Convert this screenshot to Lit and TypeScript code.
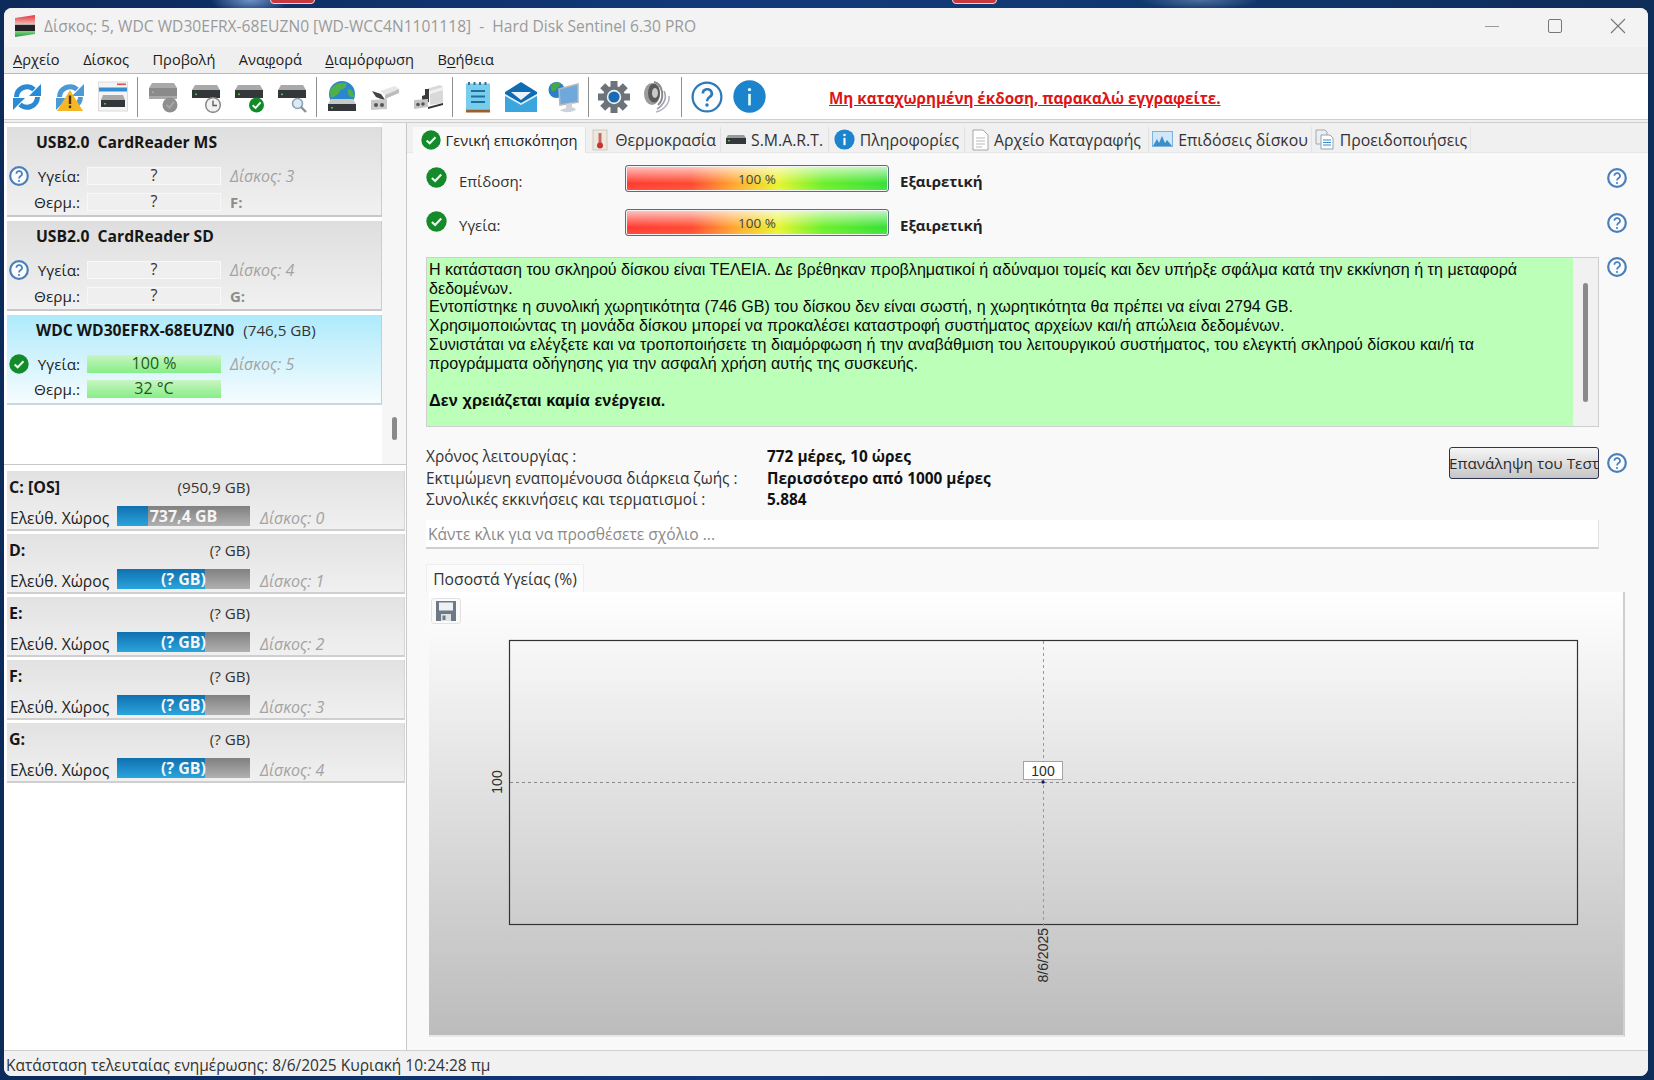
import { LitElement, html, css, svg } from "lit";
import { customElement } from "lit/decorators.js";

const hdd = (x: number, y: number, w = 28, top = "#a9a9a9", front = "#33373a", led = "#4fc04f") => svg`
  <path d="M${x + 3} ${y} H${x + w - 3} L${x + w} ${y + 5} H${x} Z" fill="${top}"/>
  <rect x="${x}" y="${y + 5}" width="${w}" height="8" fill="${front}"/>
  <rect x="${x + 3}" y="${y + 8.5}" width="2" height="1.6" fill="${led}"/>`;

const refreshArrows = (c: string) => svg`
  <path d="M5.5 16 A10.5 10.5 0 0 1 23 8.5" fill="none" stroke="${c}" stroke-width="5"/>
  <path d="M30 3 V15 H18 Z" fill="${c}"/>
  <path d="M26.5 16 A10.5 10.5 0 0 1 9 23.5" fill="none" stroke="${c}" stroke-width="5"/>
  <path d="M2 29 V17 H14 Z" fill="${c}"/>`;

const box = (inner: unknown, s = 32) => html`<svg width="${s}" height="${s}" viewBox="0 0 32 32">${inner}</svg>`;

const checkIcon = (s = 20) => html`<svg width="${s}" height="${s}" viewBox="0 0 20 20" class="sic">
  <circle cx="10" cy="10" r="9.7" fill="#158a2b"/>
  <path d="M5.6 10.4 L8.7 13.3 L14.5 7.2" fill="none" stroke="#e9f8ec" stroke-width="2"/></svg>`;

const helpGlyph = (c: string, w: number) => svg`
  <path d="M7.4 7.8 A2.8 2.6 0 1 1 11.6 10 C10.4 10.8 10 11.2 10 12.6" fill="none" stroke="${c}" stroke-width="${w}"/>
  <circle cx="10" cy="15" r="1.1" fill="${c}"/>`;

const helpIcon = (s = 20) => html`<svg width="${s}" height="${s}" viewBox="0 0 20 20" class="sic">
  <circle cx="10" cy="10" r="8.8" fill="#fafcff" stroke="#4a7fb9" stroke-width="2.2"/>${helpGlyph("#4a7fb9", 1.7)}</svg>`;

const infoIcon = (s = 20) => html`<svg width="${s}" height="${s}" viewBox="0 0 20 20" class="sic">
  <circle cx="10" cy="10" r="9.6" fill="#1b84cc"/>
  <rect x="9" y="8.4" width="2" height="7" fill="#fff"/><circle cx="10" cy="5.8" r="1.2" fill="#fff"/></svg>`;

const gearTeeth = [0, 45, 90, 135, 180, 225, 270, 315];

const toolbarIcons: Record<string, unknown> = {
  refresh: box(refreshArrows("#2a8ad4")),
  warn: box(svg`${refreshArrows("#4b9ad6")}
    <path d="M16 9 L29 30 H3 Z" fill="#f5b728"/>
    <rect x="14.8" y="14.5" width="2.4" height="8.5" fill="#4a3300"/>
    <rect x="14.8" y="24.5" width="2.4" height="2.6" fill="#4a3300"/>`),
  panel: box(svg`
    <rect x="1.5" y="1" width="29" height="29" fill="#f4f4f4" stroke="#dcdcdc"/>
    <rect x="20" y="2.5" width="9" height="1.6" fill="#d9534f"/>
    <rect x="2" y="6.5" width="28" height="4" fill="#2f8fd0"/>
    <path d="M6 14 H26 L28 19 H4 Z" fill="#a9a9a9"/>
    <rect x="4" y="19" width="24" height="7" fill="#33373a"/>
    <rect x="7" y="22" width="2" height="1.5" fill="#4fc04f"/>`),
  hddGray: box(svg`
    ${hdd(2, 2, 28, "#a9a9a9", "#8a8a8a", "#a9a9a9")}
    <rect x="2" y="15" width="28" height="3" fill="#a9a9a9"/>
    <circle cx="23" cy="24" r="7.5" fill="#8f8f8f"/>
    <path d="M19.5 24 L22.4 26.6 L27 21" fill="none" stroke="#a8a8a8" stroke-width="1.8"/>`),
  hddClock: box(svg`
    ${hdd(2, 4)}
    <circle cx="23" cy="24" r="7.3" fill="#f1f1f1" stroke="#8a8a8a" stroke-width="1.5"/>
    <path d="M23 19.5 V24.5 H27" fill="none" stroke="#5e5e5e" stroke-width="1.4"/>`),
  hddCheck: box(svg`
    ${hdd(2, 4)}
    <circle cx="23.5" cy="24" r="7.5" fill="#128a2a"/>
    <path d="M19.6 24.2 L22.6 27 L27.6 21.4" fill="none" stroke="#fff" stroke-width="1.9"/>`),
  hddSearch: box(svg`
    ${hdd(2, 4)}
    <circle cx="21.5" cy="22.5" r="5" fill="#dceaf5" stroke="#8ca3b5" stroke-width="1.6"/>
    <path d="M25 26 L30 31" stroke="#8f8f8f" stroke-width="2.4"/>`),
  globeHdd: box(svg`
    <circle cx="16" cy="13" r="13" fill="#2a86cf"/>
    <path d="M6 6 C10 2 16 1 20 2 C22 6 17 9 14 9 C14 13 9 15 6 17 C3 14 4 9 6 6 Z" fill="#4fb048"/>
    <path d="M22 8 C26 8 28 12 28 16 C25 17 21 15 22 8 Z" fill="#4fb048"/>
    <path d="M5 18 H27 L30 23 H2 Z" fill="#c8c8c8"/>
    <rect x="2" y="23" width="28" height="7" fill="#33373a"/>
    <rect x="5" y="26" width="2" height="1.5" fill="#4fc04f"/>`),
  tool1: box(svg`
    <path d="M11 10 L26 5 L30 8 L16 14 Z" fill="#e7e7e7"/><path d="M16 14 L30 8 V12 L16 18 Z" fill="#bdbdbd"/>
    <path d="M3 10 L12 13 L17 20 L7 16 Z" fill="#444"/>
    <path d="M2 19 L18 18 V28 L2 29 Z" fill="#c9c9c9"/>
    <circle cx="7" cy="24" r="2" fill="#555"/><circle cx="13" cy="24" r="2" fill="#555"/>`),
  tool2: box(svg`
    <path d="M14 8 L28 4 L31 6 V22 L18 24 V10 Z" fill="#d9d9d9"/><path d="M18 10 L31 6 V9 L18 13 Z" fill="#f1f1f1"/>
    <path d="M13 8 H17 V21 L10 22 V15 L13 14 Z" fill="#3b3b3b"/>
    <path d="M2 19 L16 18 V26 L2 28 Z" fill="#c6c6c6"/>
    <circle cx="6" cy="23.5" r="1.8" fill="#555"/><circle cx="11" cy="23" r="1.8" fill="#555"/>
    <path d="M16 26 L31 22 V24 L16 28 Z" fill="#333"/>`),
  note: box(svg`
    <rect x="4" y="2.5" width="24" height="26" fill="#79cdec"/>
    <rect x="4" y="28.5" width="24" height="3" fill="#9c5f2b"/>
    <path d="M7 1 V4 M12.5 1 V4 M18 1 V4 M23.5 1 V4" stroke="#3a6f90" stroke-width="2"/>
    <path d="M9 10 H23 M9 15.5 H23 M9 21 H23" stroke="#1f6f9c" stroke-width="1.8"/>`),
  mail: box(svg`
    <path d="M0 11 L16 1 L32 11 V13 L16 23 L0 13 Z" fill="#0f6cb3"/>
    <path d="M6 11 H26 L16 19 Z" fill="#eaf4fb"/>
    <path d="M0 13 L16 23 L32 13 V31 H0 Z" fill="#3ba5de"/>
    <path d="M0 13 L16 22 L32 13 L32 15 L16 24 L0 15Z" fill="#d8eefb"/>`),
  net: box(svg`
    <circle cx="8.5" cy="9" r="8" fill="#2a7fc8"/>
    <path d="M3 4 C6 1 10 1 13 2 C12 6 8 7 7 10 C4 11 2 8 3 4 Z" fill="#45a845"/>
    <path d="M11 8 L30 3 V21 L12 24 Z" fill="#6fa9dc" stroke="#b4b8bd" stroke-width="1.5"/>
    <path d="M18 23 V27 L12 29 C14 32 26 32 28 28 L24 26 V22 Z" fill="#cfd3d8"/>`),
  gear: box(svg`
    ${gearTeeth.map((a) => svg`<rect x="12.5" y="0" width="7" height="8" fill="#6d737a" transform="rotate(${a} 16 16)"/>`)}
    <circle cx="16" cy="16" r="11" fill="#6d737a"/>
    <circle cx="16" cy="16" r="7.2" fill="#f3f3f3"/>
    <circle cx="16" cy="16" r="5.6" fill="#1a6bb5"/>`),
  speaker: box(svg`
    <ellipse cx="11" cy="13" rx="8" ry="11" fill="#9b9b9b"/>
    <ellipse cx="13" cy="12" rx="6" ry="9.5" fill="#5a5a5a"/>
    <ellipse cx="14" cy="12" rx="3" ry="5" fill="#c9c9c9"/>
    <path d="M13 1 C22 3 24 18 17 24" fill="none" stroke="#8b8b8b" stroke-width="2"/>
    <path d="M23 10 C26 16 24 23 16 28" fill="none" stroke="#a0a0b0" stroke-width="1.6"/>
    <path d="M28 15 C29 21 24 29 15 31" fill="none" stroke="#b4b4c4" stroke-width="1.6"/>`),
  help: html`<svg width="32" height="32" viewBox="0 0 20 20">
    <circle cx="10" cy="10" r="9" fill="#fafcff" stroke="#2f78b7" stroke-width="1.4"/>${helpGlyph("#2f78b7", 1.6)}</svg>`,
  info: html`<svg width="33" height="33" viewBox="0 0 20 20">
    <circle cx="10" cy="10" r="9.8" fill="#1b84cc"/>
    <rect x="9.2" y="8.4" width="1.6" height="7" fill="#dff"/><circle cx="10" cy="5.8" r="1" fill="#dff"/></svg>`,
};

const toolbarGroups = [
  ["refresh", "warn", "panel"],
  ["hddGray", "hddClock", "hddCheck", "hddSearch"],
  ["globeHdd", "tool1", "tool2"],
  ["note", "mail", "net"],
  ["gear", "speaker"],
  ["help", "info"],
];

const tabIcons: Record<string, unknown> = {
  check: checkIcon(20),
  temp: html`<svg width="20" height="22" viewBox="0 0 20 22" class="sic">
    <rect x="3" y="1" width="14" height="20" fill="#ece8df" stroke="#cfcabd"/>
    <rect x="8.5" y="4" width="3" height="11" fill="#c9675c"/><circle cx="10" cy="16.5" r="3" fill="#c7352a"/></svg>`,
  hdd: html`<svg width="20" height="12" viewBox="0 0 20 12" class="sic">
    <path d="M2 1 H18 L20 4 H0 Z" fill="#9a9a9a"/><rect y="4" width="20" height="6" fill="#33373a"/>
    <rect x="2" y="6" width="2" height="1.4" fill="#4fc04f"/></svg>`,
  info: infoIcon(21),
  doc: html`<svg width="17" height="22" viewBox="0 0 17 22" class="sic">
    <path d="M1 1 H11 L16 6 V21 H1 Z" fill="#fff" stroke="#a5a5a5"/>
    <path d="M4 9 H13 M4 12 H13 M4 15 H13 M4 18 H10" stroke="#b9b9b9"/></svg>`,
  perf: html`<svg width="21" height="17" viewBox="0 0 21 17" class="sic">
    <rect x=".5" y=".5" width="20" height="15" fill="#cfe7f8" stroke="#7fb3d9"/>
    <path d="M1 15 L5 8 L7 12 L10 5 L13 12 L15 9 L20 15 Z" fill="#3c8fcd"/></svg>`,
  warn: html`<svg width="20" height="21" viewBox="0 0 20 21" class="sic">
    <path d="M1 1 H10 L12 3 V15 H1 Z" fill="#eee" stroke="#9fa8b5"/>
    <path d="M6 6 H15 L18 9 V20 H6 Z" fill="#fff" stroke="#8fa3b8"/>
    <path d="M8 11 H16 M8 13.5 H16 M8 16 H16" stroke="#3d85c4"/></svg>`,
};

const tabs = [
  { t: "Γενική επισκόπηση", i: "check", w: 173, active: true },
  { t: "Θερμοκρασία", i: "temp", w: 135 },
  { t: "S.M.A.R.T.", i: "hdd", w: 108 },
  { t: "Πληροφορίες", i: "info", w: 136 },
  { t: "Αρχείο Καταγραφής", i: "doc", w: 184 },
  { t: "Επιδόσεις δίσκου", i: "perf", w: 163 },
  { t: "Προειδοποιήσεις", i: "warn", w: 159 },
];

const volumes = [
  { n: "C: [OS]", s: "(950,9 GB)", v: "737,4 GB", d: 0, used: 23 },
  { n: "D:", s: "(? GB)", v: "(? GB)", d: 1, used: 66.5 },
  { n: "E:", s: "(? GB)", v: "(? GB)", d: 2, used: 66.5 },
  { n: "F:", s: "(? GB)", v: "(? GB)", d: 3, used: 66.5 },
  { n: "G:", s: "(? GB)", v: "(? GB)", d: 4, used: 66.5 },
];

const plotChart = svg`
  <defs>
    <linearGradient id="cg" x1="0" y1="0" x2="0" y2="1">
      <stop offset="0" stop-color="#ffffff"/><stop offset="1" stop-color="#bcbcbc"/>
    </linearGradient>
  </defs>
  <rect width="1196" height="443" fill="url(#cg)"/>
  <rect x="80.5" y="48.5" width="1068" height="284" fill="none" stroke="#333" stroke-width="1.2"/>
  <path d="M614.5 49 V340" stroke="#999" stroke-dasharray="3 3"/>
  <path d="M81 190.5 H1148" stroke="#888" stroke-dasharray="3 3"/>
  <rect x="594.5" y="169.5" width="39" height="18" fill="#fff" stroke="#555" stroke-dasharray="1 1"/>
  <text x="614" y="184" text-anchor="middle" class="pt">100</text>
  <circle cx="614" cy="190" r="1.7" fill="#1a1a66"/>
  <text transform="translate(73 190) rotate(-90)" text-anchor="middle" class="pt">100</text>
  <text transform="translate(619 336) rotate(-90)" text-anchor="end" class="pt">8/6/2025</text>`;

@customElement("app-root")
export class AppRoot extends LitElement {
  static styles = css`
    :host {
      display: block; position: relative; box-sizing: border-box; width: 1654px; height: 1080px;
      padding: 8px 6px 4px 4px; overflow: hidden;
      font-family: "Open Sans", "Noto Sans", sans-serif; font-size: 15px; color: #222;
      background:
        radial-gradient(ellipse 40px 14px at 250px 0, #6f93c8 0, transparent 100%),
        radial-gradient(ellipse 60px 10px at 1200px 0, #4d6f9c 0, transparent 100%),
        linear-gradient(90deg, #0c2a5a, #123a7a 45%, #10386f 70%, #0e2c58);
    }
    .pill { position: absolute; top: -6px; height: 10px; border-radius: 4px; background: #c8383f; border: 1.5px solid #f3d9d9; box-sizing: border-box; }
    .pill.a { left: 270px; width: 45px; }
    .pill.b { left: 952px; width: 45px; }
    .window { height: 100%; display: flex; flex-direction: column; border-radius: 8px; overflow: hidden; background: #f1f1f1; }

    .title { height: 39px; box-sizing: border-box; padding: 0 0 3px 10px; flex: none; display: flex; align-items: center; background: #f3f3f3; color: #9a9a9a; font-size: 15.6px; white-space: pre; }
    .title svg { margin-right: 8px; }
    .title .sp { flex: 1; }
    .ctl { width: 63px; display: flex; justify-content: center; }
    .ctls { display: flex; margin-right: -1px; }
    .ctls svg { margin-right: 0; }

    .menu { flex: none; box-sizing: content-box; display: flex; align-items: center; gap: 23.5px; padding: 0 0 2px 9px; height: 24px; background: #efefef; border-bottom: 1px solid #b9b9b9; font-size: 14.6px; color: #1c1c1c; }
    .menu u { text-underline-offset: 2px; }

    .toolbar { height: 45px; flex: none; display: flex; align-items: center; padding-left: 1px; background: #fff; border-bottom: 1px solid #cfcfcf; }
    .btn { width: 43px; display: flex; justify-content: center; align-items: center; }
    .sep { width: 7px; height: 40px; display: flex; justify-content: center; }
    .sep::before { content: ""; width: 1px; background: #8f8f8f; }
    .nag { margin: 3px 0 0 58px; color: #dc1616; font-weight: 700; font-size: 15.2px; text-decoration: underline; white-space: nowrap; }
    .gapline { height: 3px; flex: none; background: #f0f0f0; border-bottom: 1px solid #cdcdcd; box-sizing: border-box; }

    .main { flex: 1; min-height: 0; display: flex; }
    .left { width: 403px; flex: none; display: flex; flex-direction: column; background: #fff; border-right: 1px solid #c8c8c8; box-sizing: border-box; }
    .drives { height: 342px; flex: none; display: flex; border-bottom: 1px solid #c8c8c8; box-sizing: border-box; }
    .drivelist { width: 378px; flex: none; padding: 4px 0 0 3px; box-sizing: border-box; display: flex; flex-direction: column; gap: 4px; }
    .track { flex: 1; background: #f6f6f6; display: flex; justify-content: center; align-items: flex-end; padding-bottom: 24px; }
    .thumb { width: 5px; height: 23px; border-radius: 3px; background: #8a8a8a; }

    .drive { height: 90px; box-sizing: border-box; border-bottom: 2px solid #c8c8c8; border-right: 1px solid #ccc; background: linear-gradient(#dedede, #f1f1f1); }
    .drive.sel { background: linear-gradient(#aeeafb, #f6fcfe); border-bottom-color: #c8d8e0; }
    .dtitle { height: 30px; margin-bottom: 7px; padding-left: 29px; display: flex; align-items: center; gap: 9px; font-weight: 700; font-size: 15.7px; color: #161616; white-space: pre; }
    .dtitle span { font-weight: 400; font-size: 15.2px; color: #333; }
    .drow { display: grid; grid-template-columns: 19px 51px 141px auto; align-items: center; height: 19px; padding-left: 3px; margin-bottom: 8px; }
    .drow .sic { margin-left: -1px; }
    .dlabel { text-align: right; white-space: nowrap; font-size: 15.3px; color: #222; padding-top: 0; }
    .dval { margin-left: 7px; height: 18px; line-height: 14px; text-align: center; background: #efefef; border: 1px solid #f8f8f8; box-sizing: border-box; font-size: 16px; color: #333; }
    .dval.ok { line-height: 16px; background: linear-gradient(#c9f5c3, #86ee86); border: none; color: #1d5a1d; }
    .dside { margin-left: 9px; font-style: italic; font-size: 16px; padding-top: 1px; color: #a3a3a3; white-space: nowrap; }
    .dside.b { font-style: normal; font-weight: 700; font-size: 15px; color: #8d8d8d; }

    .vols { padding: 6px 0 0 3px; display: flex; flex-direction: column; gap: 3px; }
    .vol { width: 398px; height: 60px; box-sizing: border-box; background: linear-gradient(#e2e2e2, #f0f0f0); border-bottom: 2px solid #cfcfcf; border-right: 1px solid #d4d4d4; }
    .vhead { height: 35px; padding: 0 0 3px 2px; width: 243px; box-sizing: border-box; display: flex; justify-content: space-between; align-items: center; white-space: nowrap; }
    .vhead b { color: #161616; font-size: 16px; }
    .vhead span { color: #333; font-size: 15.2px; }
    .vrow { display: flex; align-items: center; height: 20px; padding-left: 3px; white-space: nowrap; }
    .vrow .lbl { width: 107px; flex: none; color: #222; font-size: 15.7px; padding-top: 3px; }
    .vbar { width: 133px; height: 20px; flex: none; display: flex; justify-content: center; align-items: center; font-weight: 700; font-size: 16px; color: #f4f4f4; background: linear-gradient(#808080, #b0b0b0); position: relative; overflow: hidden; }
    .vfill { position: absolute; left: 0; top: 0; bottom: 0; background: linear-gradient(#1070b0, #2aa4dc); }
    .vtext { position: relative; }
    .vrow .disk { margin-left: 10px; font-style: italic; font-size: 16px; padding-top: 3px; color: #a3a3a3; }

    .right { flex: 1; min-width: 0; display: flex; flex-direction: column; background: #f9f9f9; }
    .tabs { height: 30px; flex: none; box-sizing: border-box; padding: 4px 0 0 6px; display: flex; background: #f0f0f0; border-bottom: 1px solid #e6e6e6; }
    .tab { display: flex; align-items: center; justify-content: center; gap: 5px; box-sizing: border-box; border-right: 1px solid #e2e2e2; white-space: nowrap; font-size: 15.8px; color: #333; }
    .tab.active { background: #f9f9f9; height: 26px; color: #222; font-size: 14.7px; }

    .content { flex: 1; min-height: 0; padding: 12px 19px 13px 19px; display: flex; flex-direction: column; }
    .hrow { display: flex; }
    .hrow.second { margin-top: 17px; }
    .hmain { width: 1173px; flex: none; }
    .hicon { margin: 3px 0 0 8px; }
    .second .hicon { margin-top: 4px; }
    .msgwrap .hicon { margin-top: 0; }
    .mrow { height: 27px; display: flex; align-items: center; }
    .mrow .ci { margin: -2px 0 0 0; display: flex; }
    .mrow .l { width: 166px; margin-left: 12px; flex: none; padding-top: 4px; color: #333; }
    .meter { width: 264px; height: 27px; flex: none; box-sizing: border-box; border: 1px solid #5a6c84; border-radius: 3px; box-shadow: inset 0 0 0 1px #f4f4f4; position: relative; display: flex; justify-content: center; align-items: center; font-size: 13.5px; color: #444;
      background:
        linear-gradient(rgba(255,255,255,.72), rgba(255,255,255,.25) 45%, rgba(255,255,255,0) 70%, rgba(255,255,255,.1)),
        linear-gradient(90deg, #ff3a30 0, #ff4a30 25%, #ffab2e 42%, #e8f52e 58%, #6cf02a 75%, #35e035 100%); }
    .mval { margin-left: 11px; font-weight: 700; color: #222; padding-top: 4px; }

    .msgwrap { margin-top: 21px; }
    .msg { height: 170px; box-sizing: border-box; display: flex; border: 1px solid #cfcfcf; background: #f1f1f1; }
    .msgtext { width: 1146px; flex: none; background: #bcffb8; padding: 2px 2px 0 2px; box-sizing: border-box; font-family: "Liberation Sans", Arial, sans-serif; font-size: 16.1px; line-height: 18.7px; color: #0a0a0a; }
    .msgtext div { white-space: nowrap; min-height: 18.7px; }
    .msgtext b { font-size: 16.3px; letter-spacing: .1px; }
    .msgtrack { flex: 1; display: flex; justify-content: center; padding-top: 25px; }
    .msgthumb { width: 5px; height: 119px; border-radius: 3px; background: #8a8a8a; }

    .infowrap { margin-top: 20px; height: 63px; }
    .info { display: flex; justify-content: space-between; height: 63px; }
    .lines { margin-top: -1px; font-size: 15.4px; }
    .line { height: 21.5px; line-height: 21.5px; display: flex; white-space: nowrap; color: #333; }
    .line .k { width: 341px; }
    .line .v { font-weight: 700; color: #111; }
    .retest { width: 150px; height: 32px; box-sizing: border-box; border: 1px solid #2f3550; border-radius: 3px; background: linear-gradient(#f6f6f6, #c6c6c6); font-family: inherit; font-size: 15.3px; color: #2a2a2a; display: flex; justify-content: center; align-items: center; overflow: hidden; white-space: nowrap; padding: 0; }
    .infowrap .hicon { margin-top: 6px; }

    .comment { margin-top: 10px; width: 1173px; height: 29px; flex: none; box-sizing: border-box; background: #fff; border-bottom: 2px solid #cfcfcf; border-right: 1px solid #e4e4e4; padding: 1px 0 0 2px; line-height: 26px; font-size: 15.6px; color: #8a8a8a; }
    .ctab { margin-top: 15px; width: 158px; height: 28px; flex: none; box-sizing: border-box; background: #fbfbfb; border: 1px solid #eee; border-bottom: none; font-size: 15.7px; color: #333; display: flex; align-items: center; justify-content: center; }
    .chart { position: relative; flex: 1; min-height: 0; margin: 0 4px 0 3px; border-right: 2px solid #cfcfcf; border-bottom: 2px solid #e8e8e8; box-sizing: border-box; overflow: hidden; }
    .chart svg.plot { display: block; width: 1196px; height: 443px; }
    .pt { font-family: "Liberation Sans", Arial, sans-serif; font-size: 14px; fill: #2d2d2d; }
    .save { position: absolute; left: 2px; top: 6px; width: 30px; height: 26px; box-sizing: border-box; border: 1px solid #e2e2e2; border-radius: 3px; background: #fafafa; display: flex; justify-content: center; align-items: center; }

    .status { height: 26px; flex: none; display: flex; align-items: center; padding: 3px 0 0 2px; background: #f1f1f1; border-top: 1px solid #cfcfcf; box-sizing: border-box; font-size: 15.5px; color: #333; white-space: nowrap; }
    .sic { flex: none; display: block; }
  `;

  private driveCard(name: string, size: string, sel: boolean, disk: number, letter: string) {
    return html`<div class="drive ${sel ? "sel" : ""}">
      <div class="dtitle">${name}${size ? html`<span>${size}</span>` : ""}</div>
      <div class="drow">
        ${sel ? checkIcon(20) : helpIcon(20)}
        <div class="dlabel">Υγεία:</div>
        <div class="dval ${sel ? "ok" : ""}">${sel ? "100 %" : "?"}</div>
        <div class="dside">Δίσκος: ${disk}</div>
      </div>
      <div class="drow">
        <span></span>
        <div class="dlabel">Θερμ.:</div>
        <div class="dval ${sel ? "ok" : ""}">${sel ? "32 °C" : "?"}</div>
        <div class="dside b">${letter}</div>
      </div>
    </div>`;
  }

  render() {
    return html`
      <div class="pill a"></div><div class="pill b"></div>
      <div class="window">
        <div class="title">
          <svg width="22" height="22" viewBox="0 0 22 22">
            <defs>
              <linearGradient id="tg" x1="0" y1="0" x2="0" y2="1">
                <stop offset="0" stop-color="#e0363a"/><stop offset=".4" stop-color="#f4b5b0"/>
                <stop offset=".42" stop-color="#eee"/><stop offset=".46" stop-color="#222"/>
                <stop offset=".72" stop-color="#222"/><stop offset=".74" stop-color="#7fd47f"/>
                <stop offset="1" stop-color="#1f9a3c"/>
              </linearGradient>
            </defs>
            <path d="M1 3 L21 0 V19 L1 22 Z" fill="url(#tg)"/>
          </svg>
          <span>Δίσκος: 5, WDC WD30EFRX-68EUZN0 [WD-WCC4N1101118]  -  Hard Disk Sentinel 6.30 PRO</span>
          <span class="sp"></span>
          <div class="ctls">
            <div class="ctl"><svg width="16" height="16"><path d="M1 8.5 H15" stroke="#999"/></svg></div>
            <div class="ctl"><svg width="16" height="16"><rect x="1.5" y="1.5" width="13" height="13" rx="1.5" fill="none" stroke="#777"/></svg></div>
            <div class="ctl"><svg width="16" height="16"><path d="M1 1 L15 15 M15 1 L1 15" stroke="#777" stroke-width="1.1"/></svg></div>
          </div>
        </div>
        <div class="menu">
          <span><u>Α</u>ρχείο</span><span>Δίσκος</span><span>Προβολή</span><span>Ανα<u>φ</u>ορά</span><span><u>Δ</u>ιαμόρφωση</span><span>Β<u>ο</u>ήθεια</span>
        </div>
        <div class="toolbar">
          ${toolbarGroups.map((g, i) => html`${i ? html`<div class="sep"></div>` : ""}${g.map((k) => html`<div class="btn">${toolbarIcons[k]}</div>`)}`)}
          <div class="nag">Μη καταχωρημένη έκδοση, παρακαλώ εγγραφείτε.</div>
        </div>
        <div class="gapline"></div>
        <div class="main">
          <div class="left">
            <div class="drives">
              <div class="drivelist">
                ${this.driveCard("USB2.0  CardReader MS", "", false, 3, "F:")}
                ${this.driveCard("USB2.0  CardReader SD", "", false, 4, "G:")}
                ${this.driveCard("WDC WD30EFRX-68EUZN0", "(746,5 GB)", true, 5, "")}
              </div>
              <div class="track"><div class="thumb"></div></div>
            </div>
            <div class="vols">
              ${volumes.map((v) => html`<div class="vol">
                <div class="vhead"><b>${v.n}</b><span>${v.s}</span></div>
                <div class="vrow"><span class="lbl">Ελεύθ. Χώρος</span>
                  <div class="vbar"><div class="vfill" style="width:${v.used}%"></div><span class="vtext">${v.v}</span></div>
                  <span class="disk">Δίσκος: ${v.d}</span></div>
              </div>`)}
            </div>
          </div>
          <div class="right">
            <div class="tabs">
              ${tabs.map((t) => html`<div class="tab ${t.active ? "active" : ""}" style="width:${t.w}px">${tabIcons[t.i]}<span>${t.t}</span></div>`)}
            </div>
            <div class="content">
              <div class="hrow">
                <div class="hmain mrow"><span class="ci">${checkIcon(21)}</span><span class="l">Επίδοση:</span><div class="meter">100 %</div><span class="mval">Εξαιρετική</span></div>
                <div class="hicon">${helpIcon(20)}</div>
              </div>
              <div class="hrow second">
                <div class="hmain mrow"><span class="ci">${checkIcon(21)}</span><span class="l">Υγεία:</span><div class="meter">100 %</div><span class="mval">Εξαιρετική</span></div>
                <div class="hicon">${helpIcon(20)}</div>
              </div>
              <div class="hrow msgwrap">
                <div class="hmain msg">
                  <div class="msgtext">
                    <div>Η κατάσταση του σκληρού δίσκου είναι ΤΕΛΕΙΑ. Δε βρέθηκαν προβληματικοί ή αδύναμοι τομείς και δεν υπήρξε σφάλμα κατά την εκκίνηση ή τη μεταφορά</div>
                    <div>δεδομένων.</div>
                    <div>Εντοπίστηκε η συνολική χωρητικότητα (746 GB) του δίσκου δεν είναι σωστή, η χωρητικότητα θα πρέπει να είναι 2794 GB.</div>
                    <div>Χρησιμοποιώντας τη μονάδα δίσκου μπορεί να προκαλέσει καταστροφή συστήματος αρχείων και/ή απώλεια δεδομένων.</div>
                    <div>Συνιστάται να ελέγξετε και να τροποποιήσετε τη διαμόρφωση ή την αναβάθμιση του λειτουργικού συστήματος, του ελεγκτή σκληρού δίσκου και/ή τα</div>
                    <div>προγράμματα οδήγησης για την ασφαλή χρήση αυτής της συσκευής.</div>
                    <div></div>
                    <div><b>Δεν χρειάζεται καμία ενέργεια.</b></div>
                  </div>
                  <div class="msgtrack"><div class="msgthumb"></div></div>
                </div>
                <div class="hicon">${helpIcon(20)}</div>
              </div>
              <div class="hrow infowrap">
                <div class="hmain info">
                  <div class="lines">
                    <div class="line"><span class="k">Χρόνος λειτουργίας :</span><span class="v">772 μέρες, 10 ώρες</span></div>
                    <div class="line"><span class="k">Εκτιμώμενη εναπομένουσα διάρκεια ζωής :</span><span class="v">Περισσότερο από 1000 μέρες</span></div>
                    <div class="line"><span class="k">Συνολικές εκκινήσεις και τερματισμοί :</span><span class="v">5.884</span></div>
                  </div>
                  <button class="retest"><span>Επανάληψη του Τεστ</span></button>
                </div>
                <div class="hicon">${helpIcon(20)}</div>
              </div>
              <div class="comment">Κάντε κλικ για να προσθέσετε σχόλιο ...</div>
              <div class="ctab">Ποσοστά Υγείας (%)</div>
              <div class="chart">
                <svg class="plot" viewBox="0 0 1196 443">${plotChart}</svg>
                <div class="save">
                  <svg width="20" height="20" viewBox="0 0 20 20">
                    <path d="M0 0 H20 V20 H0 Z" fill="#6d7a86"/>
                    <rect x="3" y="1.5" width="14" height="8" fill="#eef1f3"/>
                    <rect x="5" y="13" width="10" height="7" fill="#dfe3e6"/>
                    <rect x="6.5" y="14.5" width="3" height="4.5" fill="#6d7a86"/>
                  </svg>
                </div>
              </div>
            </div>
          </div>
        </div>
        <div class="status">Κατάσταση τελευταίας ενημέρωσης: 8/6/2025 Κυριακή 10:24:28 πμ</div>
      </div>
    `;
  }
}
